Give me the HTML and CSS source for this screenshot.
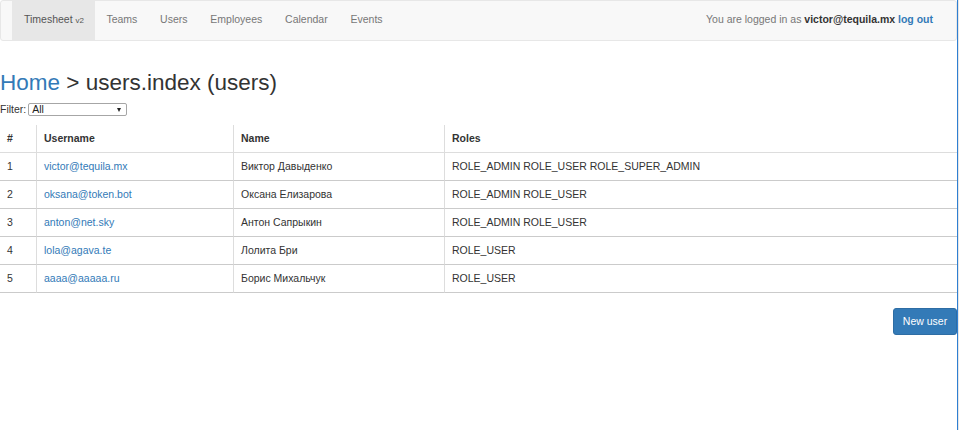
FILE: index.html
```html
<!DOCTYPE html>
<html lang="en">
<head>
<meta charset="utf-8">
<title>users.index</title>
<link rel="stylesheet" href="styles.css">
</head>
<body>
<div class="page">
  <div class="main">
    <nav class="navbar">
      <ul class="nav">
        <li><a class="brand" href="#">Timesheet <small>v2</small></a></li>
        <li><a href="#">Teams</a></li>
        <li><a href="#">Users</a></li>
        <li><a href="#">Employees</a></li>
        <li><a href="#">Calendar</a></li>
        <li><a href="#">Events</a></li>
      </ul>
      <p class="navbar-text">You are logged in as <b>victor@tequila.mx</b> <a class="logout" href="#">log out</a></p>
    </nav>

    <h1 class="title"><a href="#">Home</a> &gt; users.index (users)</h1>

    <div class="filter">
      <label for="f">Filter:</label>
      <span class="select-wrap">
        <select id="f" class="select"><option>All</option></select>
      </span>
    </div>

    <table class="users">
      <thead>
        <tr><th class="c1">#</th><th class="c2">Username</th><th class="c3">Name</th><th class="c4">Roles</th></tr>
      </thead>
      <tbody>
        <tr><td>1</td><td><a href="#">victor@tequila.mx</a></td><td>Виктор Давыденко</td><td>ROLE_ADMIN ROLE_USER ROLE_SUPER_ADMIN</td></tr>
        <tr><td>2</td><td><a href="#">oksana@token.bot</a></td><td>Оксана Елизарова</td><td>ROLE_ADMIN ROLE_USER</td></tr>
        <tr><td>3</td><td><a href="#">anton@net.sky</a></td><td>Антон Сапрыкин</td><td>ROLE_ADMIN ROLE_USER</td></tr>
        <tr><td>4</td><td><a href="#">lola@agava.te</a></td><td>Лолита Бри</td><td>ROLE_USER</td></tr>
        <tr><td>5</td><td><a href="#">aaaa@aaaaa.ru</a></td><td>Борис Михальчук</td><td>ROLE_USER</td></tr>
      </tbody>
    </table>

    <div class="actions">
      <a class="btn" href="#">New user</a>
    </div>
  </div>
  <div class="edge"></div>
</div>
</body>
</html>
```
FILE: styles.css
```css
* { box-sizing: border-box; }

html, body {
  margin: 0;
  padding: 0;
  background: #fff;
}

body {
  font-family: "Liberation Sans", Arial, Helvetica, sans-serif;
  font-size: 10.5px;
  line-height: 15px;
  color: #333;
}

a { color: #337ab7; text-decoration: none; }

.page {
  display: flex;
  min-height: 430px;
}

.main {
  width: 957px;
  flex: none;
}

.edge {
  width: 2px;
  border-left: 1px solid #2f7fd2;
  background: #e6e6e6;
}

/* navbar */
.navbar {
  display: flex;
  justify-content: space-between;
  align-items: stretch;
  height: 41px;
  background: #f8f8f8;
  border: 1px solid #e7e7e7;
  border-radius: 3px;
  padding-left: 11px;
}

.nav {
  display: flex;
  list-style: none;
  margin: 0;
  padding: 0;
}

.nav a {
  display: block;
  padding: 11px 11.4px 13px;
  line-height: 15px;
  color: #777;
}

.nav a.brand {
  background: #e7e7e7;
  color: #555;
  padding-left: 12px;
  padding-right: 11px;
}

.brand small {
  font-size: 8px;
}

.navbar-text {
  margin: 0;
  padding: 11px 23px 13px 0;
  line-height: 15px;
  color: #777;
}

.navbar-text b { color: #333; }
.navbar-text .logout { font-weight: bold; }

/* heading */
.title {
  margin: 29px 0 0;
  font-size: 22.5px;
  line-height: 25px;
  font-weight: 500;
}

.filter {
  display: flex;
  align-items: center;
  gap: 2px;
  margin-top: 7px;
  height: 14px;
}

.select-wrap {
  position: relative;
  display: inline-block;
}

.select-wrap::after {
  content: "";
  position: absolute;
  right: 6px;
  top: 5px;
  border-left: 2.5px solid transparent;
  border-right: 2.5px solid transparent;
  border-top: 4px solid #222;
}

.select {
  appearance: none;
  -webkit-appearance: none;
  display: block;
  width: 99px;
  height: 13px;
  margin: 0;
  padding: 0 0 0 3px;
  border: 1px solid #a6a6a6;
  border-radius: 2px;
  background: #fff;
  font-family: inherit;
  font-size: 10.5px;
  line-height: 11px;
  color: #222;
}

/* table */
.users {
  width: 957px;
  margin-top: 9px;
  border-collapse: separate;
  border-spacing: 0;
  table-layout: fixed;
}

.users th, .users td {
  padding: 6px 6px 6px 7px;
  line-height: 15px;
  text-align: left;
  vertical-align: top;
  border-left: 1px solid #ddd;
  white-space: nowrap;
}

.users th:first-child, .users td:first-child {
  border-left: 0;
}

.users th {
  font-weight: bold;
  border-bottom: 1px solid #ddd;
}

.users td {
  border-top: 1px solid #cbcbcb;
}

.users tbody tr:first-child td { border-top: 0; }

.users tbody tr:last-child td { border-bottom: 1px solid #cbcbcb; }

.c1 { width: 36px; }
.c2 { width: 197px; }
.c3 { width: 211px; }

/* actions */
.actions {
  display: flex;
  justify-content: flex-end;
  margin-top: 15px;
}

.btn {
  display: inline-block;
  width: 64px;
  height: 27px;
  line-height: 25px;
  text-align: center;
  color: #fff;
  background: #337ab7;
  border: 1px solid #2e6da4;
  border-radius: 3px;
  font-size: 10.5px;
}
```
